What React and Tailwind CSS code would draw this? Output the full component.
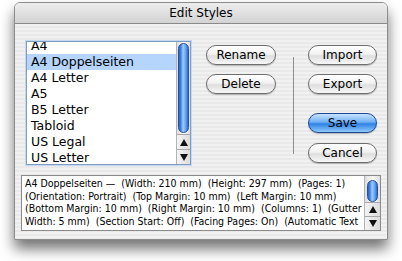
import React from 'react';

const styles = [
  'A4',
  'A4 Doppelseiten',
  'A4 Letter',
  'A5',
  'B5 Letter',
  'Tabloid',
  'US Legal',
  'US Letter',
];

const description = [
  'A4 Doppelseiten —  (Width: 210 mm)  (Height: 297 mm)  (Pages: 1)',
  '(Orientation: Portrait)  (Top Margin: 10 mm)  (Left Margin: 10 mm)',
  '(Bottom Margin: 10 mm)  (Right Margin: 10 mm)  (Columns: 1)  (Gutter',
  'Width: 5 mm)  (Section Start: Off)  (Facing Pages: On)  (Automatic Text',
];

const stripes =
  'bg-[repeating-linear-gradient(180deg,#f1f1f1_0px,#f1f1f1_2px,#e9e9e9_2px,#e9e9e9_4px)]';

const thumb =
  'bg-[linear-gradient(to_right,#2a5fbf,#4b8ee8_25%,#9fcdfb_45%,#6eabf3_70%,#2f6ad0)] border border-[#23519e]';

const Arrow = ({ up }) => (
  <svg width="8" height="7" viewBox="0 0 8 7">
    {up ? <polygon points="4,0 8,7 0,7" fill="#111" /> : <polygon points="0,0 8,0 4,7" fill="#111" />}
  </svg>
);

const ScrollArrows = () => (
  <>
    <div className="h-[15px] flex items-center justify-center border-t border-[#a8a8a8] bg-gradient-to-r from-[#f4f4f4] to-[#dcdcdc]">
      <Arrow up />
    </div>
    <div className="h-[15px] flex items-center justify-center border-t border-[#a8a8a8] bg-gradient-to-r from-[#f4f4f4] to-[#dcdcdc]">
      <Arrow />
    </div>
  </>
);

const AquaButton = ({ children, primary }) => (
  <button
    className={`h-[20px] w-full rounded-full border text-[12px] leading-none text-black flex items-center justify-center shadow-[0_1px_1px_rgba(0,0,0,0.25)] ${
      primary
        ? 'border-[#1d4a93] bg-[linear-gradient(180deg,#c9e3fd_0%,#6fb0f5_45%,#2f82e6_55%,#8fcafb_100%)]'
        : 'border-[#6e6e6e] bg-[linear-gradient(180deg,#ffffff_0%,#f2f2f2_45%,#dedede_55%,#f7f7f7_100%)]'
    }`}
  >
    {children}
  </button>
);

export default function App() {
  return (
    <div className="w-[402px] h-[261px] bg-white pt-[2px] pl-[14px] overflow-hidden font-['DejaVu_Sans',sans-serif]">
      <div className="w-[374px] h-[238px] flex flex-col rounded-t-[6px] border border-[#8c8c8c] shadow-[0_9px_14px_rgba(0,0,0,0.55)] overflow-hidden">
        {/* title bar */}
        <div className="h-[21px] shrink-0 flex items-center justify-center border-b border-[#8a8a8a] bg-gradient-to-b from-[#ededed] to-[#d3d3d3] text-[12px] text-black">
          Edit Styles
        </div>

        <div className={`flex-1 flex flex-col ${stripes}`}>
          <div className="flex mt-[17px] ml-[11px]">
            {/* style list */}
            <div className="w-[165px] h-[124px] flex border border-[#7f9cc2] bg-white shadow-[0_0_0_1px_#c4d8ef]">
              <div className="flex-1 overflow-hidden">
                <div className="-mt-[4px]">
                  {styles.map((s) => (
                    <div
                      key={s}
                      className={`h-[16px] pl-[4px] flex items-center text-[12.5px] leading-none text-black whitespace-nowrap ${
                        s === 'A4 Doppelseiten' ? 'bg-[#b5d5fd]' : ''
                      }`}
                    >
                      {s}
                    </div>
                  ))}
                </div>
              </div>
              <div className="w-[14px] flex flex-col border-l border-[#b3b3b3] bg-[#f2f2f2]">
                <div className="flex-1 px-[1px] pt-[1px] bg-gradient-to-r from-[#dedede] via-[#f7f7f7] to-[#dedede]">
                  <div className={`h-[90px] rounded-full ${thumb}`} />
                </div>
                <ScrollArrows />
              </div>
            </div>

            {/* rename / delete */}
            <div className="ml-[15px] mt-[4px] w-[70px] flex flex-col gap-[9px]">
              <AquaButton>Rename</AquaButton>
              <AquaButton>Delete</AquaButton>
            </div>

            <div className="ml-[17px] mt-[16px] w-px h-[97px] bg-[#8f8f8f]" />

            {/* import / export / save / cancel */}
            <div className="ml-[14px] mt-[4px] w-[69px] flex flex-col">
              <AquaButton>Import</AquaButton>
              <div className="mt-[9px]">
                <AquaButton>Export</AquaButton>
              </div>
              <div className="mt-[19px]">
                <AquaButton primary>Save</AquaButton>
              </div>
              <div className="mt-[10px]">
                <AquaButton>Cancel</AquaButton>
              </div>
            </div>
          </div>

          {/* description */}
          <div className="mt-[10px] ml-[6px] w-[360px] h-[56px] flex border border-[#8a8a8a] bg-white">
            <div className="flex-1 overflow-hidden pl-[3px] pt-[1px] text-[10.5px] leading-[12.5px] text-black font-['DejaVu_Sans_Condensed','Liberation_Sans',sans-serif]">
              {description.map((line) => (
                <div key={line} className="whitespace-pre">
                  {line}
                </div>
              ))}
            </div>
            <div className="w-[16px] flex flex-col border-l border-[#b3b3b3]">
              <div className="flex-1 px-[2px] pt-[4px] bg-gradient-to-r from-[#dedede] via-[#f7f7f7] to-[#dedede]">
                <div className={`h-[22px] rounded-full ${thumb}`} />
              </div>
              <ScrollArrows />
            </div>
          </div>
        </div>
      </div>
    </div>
  );
}
